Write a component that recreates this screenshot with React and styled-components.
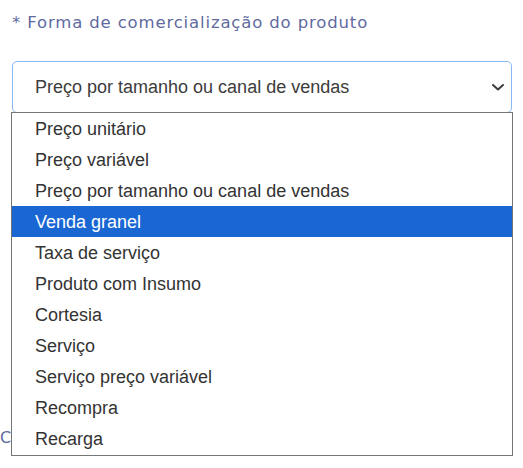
import React from "react";
import styled, { createGlobalStyle } from "styled-components";

const Global = createGlobalStyle`
  html, body { margin: 0; padding: 0; background: #ffffff; }
  body { width: 523px; height: 468px; overflow: hidden; }
`;

const Page = styled.div`
  position: relative;
  width: 523px;
  height: 468px;
  box-sizing: border-box;
  padding: 13px 11px 0 12px;
`;

const Label = styled.div`
  font-family: "DejaVu Sans", "Open Sans", sans-serif;
  font-size: 16.5px;
  line-height: 20px;
  color: #5f6a9f;
  letter-spacing: 0.85px;
  margin-bottom: 28px;
`;

const SelectBox = styled.div`
  box-sizing: border-box;
  height: 52px;
  width: 500px;
  border: 1px solid #8ab8f6;
  border-radius: 5px;
  display: flex;
  align-items: center;
  justify-content: space-between;
  padding: 0 6px 0 22px;
  font-family: "Liberation Sans", Arial, sans-serif;
  font-size: 18px;
  color: #3c3c3c;
`;

const Backdrop = styled.div`
  display: flex;
  flex-direction: column;
`;

const Divider = styled.div`
  height: 1px;
  background: #e4e4e4;
  margin-top: ${(p) => p.$top}px;
`;

const GhostLabel = styled.div`
  font-family: "DejaVu Sans", "Open Sans", sans-serif;
  font-size: 16px;
  line-height: 20px;
  color: #5f6a9f;
  margin-top: ${(p) => p.$top}px;
  margin-left: -12px;
  width: 11px;
  overflow: hidden;
`;

const Listbox = styled.ul`
  position: absolute;
  left: 11px;
  top: 112px;
  width: 502px;
  box-sizing: border-box;
  margin: 0;
  padding: 0 0 1px;
  list-style: none;
  background: #ffffff;
  border: 1px solid #767676;
  font-family: "Liberation Sans", Arial, sans-serif;
  font-size: 18px;
`;

const Option = styled.li`
  height: 31px;
  line-height: 32px;
  padding-left: 23px;
  color: ${(p) => (p.$active ? "#ffffff" : "#333333")};
  background: ${(p) => (p.$active ? "#1a67d3" : "transparent")};
`;

const options = [
  "Preço unitário",
  "Preço variável",
  "Preço por tamanho ou canal de vendas",
  "Venda granel",
  "Taxa de serviço",
  "Produto com Insumo",
  "Cortesia",
  "Serviço",
  "Serviço preço variável",
  "Recompra",
  "Recarga",
];

const Chevron = () => (
  <svg width="14" height="14" viewBox="0 0 14 14" aria-hidden="true">
    <path d="M2 5 L7 9.5 L12 5" fill="none" stroke="#3c3c3c" strokeWidth="2" strokeLinecap="round" strokeLinejoin="round" />
  </svg>
);

export default function App() {
  return (
    <>
      <Global />
      <Page>
        <Label>* Forma de comercialização do produto</Label>
        <SelectBox>
          <span>Preço por tamanho ou canal de vendas</span>
          <Chevron />
        </SelectBox>
        <Backdrop>
          <Divider $top={224} />
          <Divider $top={51} />
          <GhostLabel $top={38}>C</GhostLabel>
        </Backdrop>
        <Listbox role="listbox">
          {options.map((o, i) => (
            <Option key={o} $active={i === 3}>
              {o}
            </Option>
          ))}
        </Listbox>
      </Page>
    </>
  );
}
